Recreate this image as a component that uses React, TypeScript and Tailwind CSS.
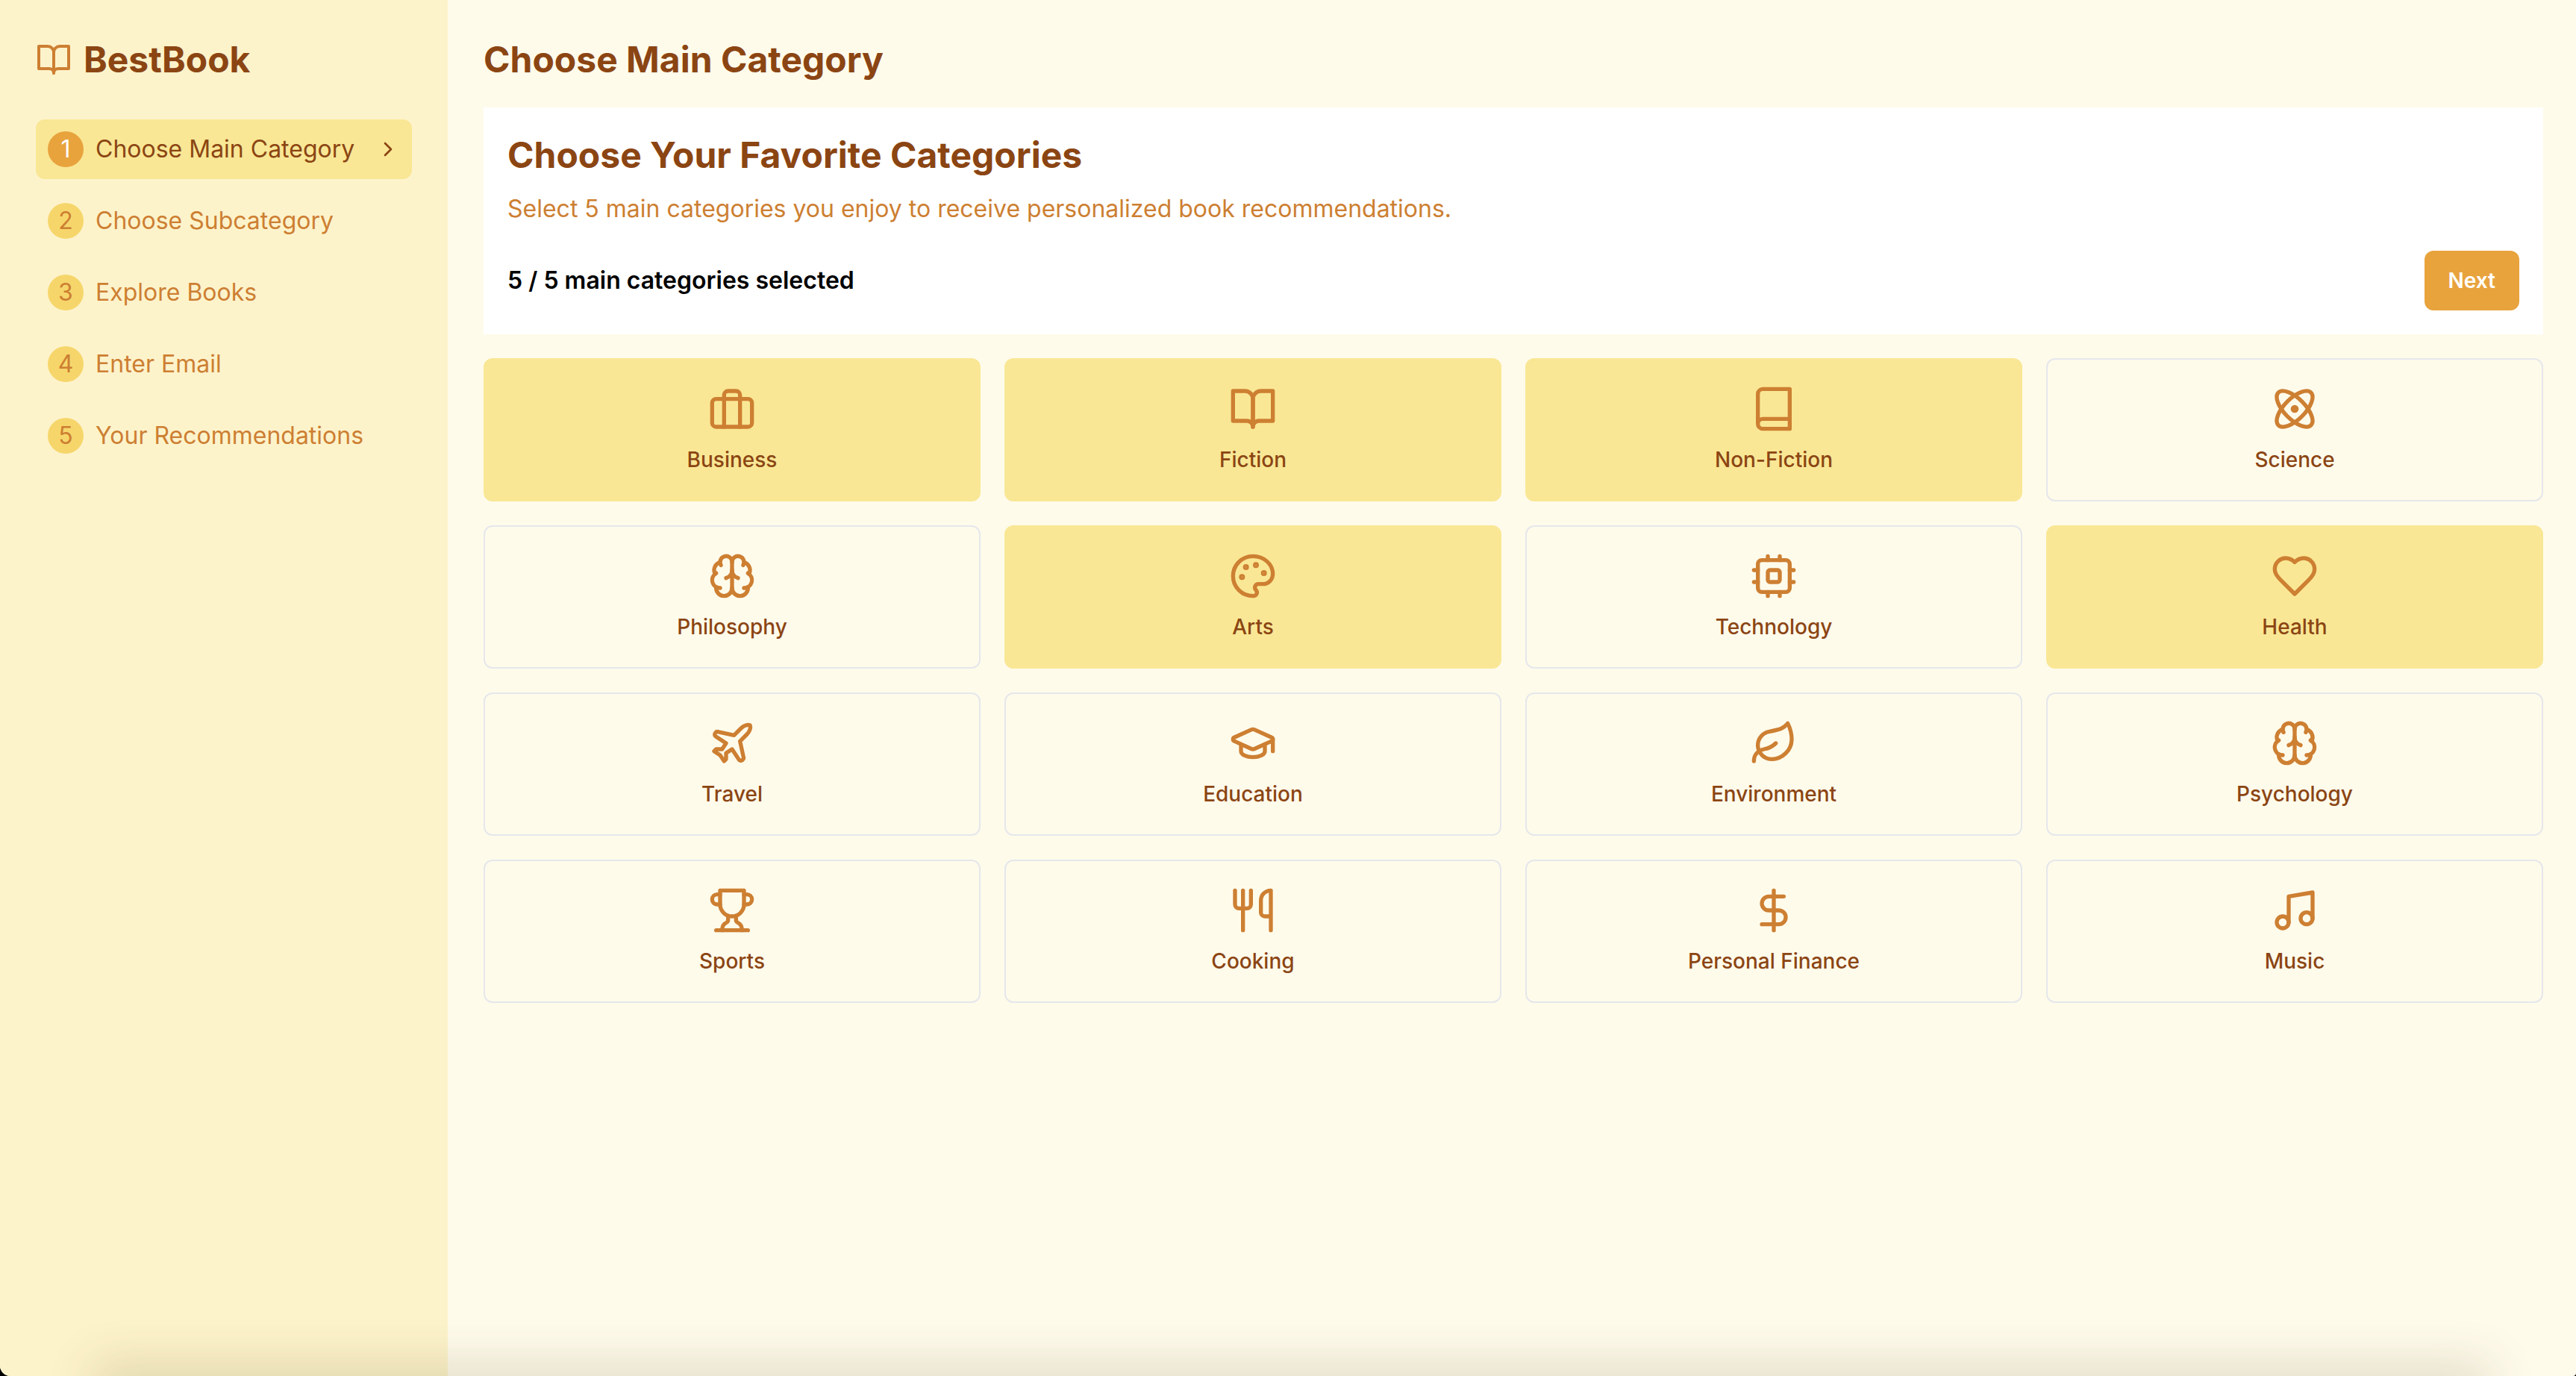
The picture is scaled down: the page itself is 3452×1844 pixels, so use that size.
import { useState, type ReactNode } from "react";
import { Atom, Brain, ChevronRight, DollarSign, GraduationCap, Leaf, Music, Palette, Plane, Utensils } from "lucide-react";

type IconProps = { className?: string };

// lucide's older shapes, the installed version redrew these
function Outline({ className, children }: IconProps & { children: ReactNode }) {
  return (
    <svg
      viewBox="0 0 24 24"
      fill="none"
      stroke="currentColor"
      strokeWidth="2"
      strokeLinecap="round"
      strokeLinejoin="round"
      className={className}
    >
      {children}
    </svg>
  );
}

const OpenBook = ({ className }: IconProps) => (
  <Outline className={className}>
    <path d="M2 3h6a4 4 0 0 1 4 4v14a3 3 0 0 0-3-3H2z" />
    <path d="M22 3h-6a4 4 0 0 0-4 4v14a3 3 0 0 1 3-3h7z" />
  </Outline>
);

const ClosedBook = ({ className }: IconProps) => (
  <Outline className={className}>
    <path d="M4 19.5v-15A2.5 2.5 0 0 1 6.5 2H20v20H6.5a2.5 2.5 0 0 1 0-5H20" />
  </Outline>
);

const Case = ({ className }: IconProps) => (
  <Outline className={className}>
    <rect x="2" y="7" width="20" height="14" rx="2" />
    <path d="M16 21V5a2 2 0 0 0-2-2h-4a2 2 0 0 0-2 2v16" />
  </Outline>
);

const Chip = ({ className }: IconProps) => (
  <Outline className={className}>
    <rect x="4" y="4" width="16" height="16" rx="2" />
    <rect x="9" y="9" width="6" height="6" rx="1" />
    <path d="M9 2v2M15 2v2M9 20v2M15 20v2M2 9h2M2 15h2M20 9h2M20 15h2" />
  </Outline>
);

const OldHeart = ({ className }: IconProps) => (
  <Outline className={className}>
    <path d="M19 14c1.49-1.46 3-3.21 3-5.5A5.5 5.5 0 0 0 16.5 3c-1.76 0-3 .5-4.5 2-1.5-1.5-2.74-2-4.5-2A5.5 5.5 0 0 0 2 8.5c0 2.3 1.5 4.05 3 5.5l7 7Z" />
  </Outline>
);

const Cup = ({ className }: IconProps) => (
  <Outline className={className}>
    <path d="M6 9H4.5a2.5 2.5 0 0 1 0-5H6" />
    <path d="M18 9h1.5a2.5 2.5 0 0 0 0-5H18" />
    <path d="M4 22h16" />
    <path d="M10 14.66V17c0 .55-.47.98-.97 1.21C7.85 18.75 7 20.24 7 22" />
    <path d="M14 14.66V17c0 .55.47.98.97 1.21C16.15 18.75 17 20.24 17 22" />
    <path d="M18 2H6v7a6 6 0 0 0 12 0V2Z" />
  </Outline>
);

const STEPS = ["Choose Main Category", "Choose Subcategory", "Explore Books", "Enter Email", "Your Recommendations"];

const CATEGORIES = [
  { name: "Business", icon: Case },
  { name: "Fiction", icon: OpenBook },
  { name: "Non-Fiction", icon: ClosedBook },
  { name: "Science", icon: Atom },
  { name: "Philosophy", icon: Brain },
  { name: "Arts", icon: Palette },
  { name: "Technology", icon: Chip },
  { name: "Health", icon: OldHeart },
  { name: "Travel", icon: Plane },
  { name: "Education", icon: GraduationCap },
  { name: "Environment", icon: Leaf },
  { name: "Psychology", icon: Brain },
  { name: "Sports", icon: Cup },
  { name: "Cooking", icon: Utensils },
  { name: "Personal Finance", icon: DollarSign },
  { name: "Music", icon: Music },
];

export default function App() {
  const [selected, setSelected] = useState(["Business", "Fiction", "Non-Fiction", "Arts", "Health"]);

  const toggle = (name: string) => {
    setSelected((s) => (s.includes(name) ? s.filter((n) => n !== name) : [...s, name]));
  };

  return (
    <div className="h-screen w-full bg-black font-['Inter',sans-serif]">
      <div className="relative flex h-full w-full overflow-hidden rounded-bl-[14px] rounded-br-[4px] bg-[#fffbeb]">
        {/* Sidebar */}
        <aside className="w-[600px] shrink-0 bg-[#fdf3cb] p-12">
          <div className="mb-12 flex h-16 items-center gap-4">
            <OpenBook className="size-12 text-[#cd7f32]" />
            <span className="text-[48px] leading-[64px] font-bold text-[#8b4513]">BestBook</span>
          </div>
          <nav className="flex flex-col gap-4">
            {STEPS.map((step, i) => (
              <div
                key={step}
                className={`flex h-20 items-center gap-4 rounded-xl px-4 text-[32px] leading-[48px] ${
                  i === 0 ? "bg-[#f9e795] text-[#8b4513]" : "text-[#cd7f32]"
                }`}
              >
                <span
                  className={`flex size-12 shrink-0 items-center justify-center rounded-full ${
                    i === 0 ? "bg-[#e8a33d] text-white" : "bg-[#f6d66b] text-[#cd7f32]"
                  }`}
                >
                  {i + 1}
                </span>
                <span>{step}</span>
                {i === 0 && <ChevronRight className="ml-auto size-8" />}
              </div>
            ))}
          </nav>
        </aside>

        {/* Main */}
        <main className="flex-1 pt-12 pr-11 pl-12">
          <h1 className="mb-8 text-[48px] leading-[64px] font-bold text-[#8b4513]">Choose Main Category</h1>

          <section className="mb-8 bg-white p-8">
            <h2 className="mb-4 text-[48px] leading-[64px] font-bold text-[#8b4513]">Choose Your Favorite Categories</h2>
            <p className="mb-8 text-[32px] leading-[48px] text-[#cd7f32]">
              Select 5 main categories you enjoy to receive personalized book recommendations.
            </p>
            <div className="flex items-center justify-between">
              <span className="text-[32px] leading-[48px] font-semibold text-black">
                {selected.length} / 5 main categories selected
              </span>
              <button className="h-20 rounded-xl bg-[#e8a33d] px-8 text-[28px] leading-10 font-semibold text-white">
                Next
              </button>
            </div>
          </section>

          <div className="grid grid-cols-4 gap-8">
            {CATEGORIES.map(({ name, icon: Icon }) => {
              const on = selected.includes(name);
              return (
                <button
                  key={name}
                  onClick={() => toggle(name)}
                  className={`flex h-48 flex-col items-center justify-center gap-4 rounded-xl border-2 ${
                    on ? "border-[#f9e795] bg-[#f9e795]" : "border-[#e5e7eb] bg-[#fffbeb]"
                  }`}
                >
                  <Icon className="size-16 text-[#cd7f32]" />
                  <span className="text-[28px] leading-10 font-medium text-[#8b4513]">{name}</span>
                </button>
              );
            })}
          </div>
        </main>

        {/* window shadow along the bottom edge */}
        <div className="pointer-events-none absolute right-[130px] -bottom-6 left-[140px] h-6 shadow-[0_0_64px_16px_rgba(60,50,0,0.16)]" />
      </div>
    </div>
  );
}
